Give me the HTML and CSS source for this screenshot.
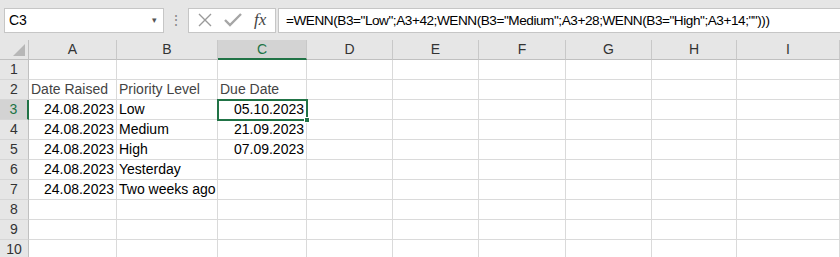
FILE: index.html
```html
<!doctype html>
<html lang="de">
<head>
<meta charset="UTF-8">
<title>Due Date</title>
<link rel="stylesheet" href="styles.css">
</head>
<body>
<div class="toolbar">
  <div class="namebox">
    <span>C3</span>
    <span class="caret">&#9662;</span>
  </div>
  <div class="grip">&#8942;</div>
  <div class="fxbox">
    <svg class="icon" width="14" height="14" viewBox="0 0 14 14">
      <path d="M1 1 L13 13 M13 1 L1 13" stroke="#9a9a9a" stroke-width="1.4" fill="none"/>
    </svg>
    <svg class="icon" width="18" height="14" viewBox="0 0 18 14">
      <path d="M1 7 L6 12 L17 1" stroke="#a6a6a6" stroke-width="2.4" fill="none"/>
    </svg>
    <span class="fx">fx</span>
  </div>
  <div class="formula">=WENN(B3="Low";A3+42;WENN(B3="Medium";A3+28;WENN(B3="High";A3+14;"")))</div>
</div>

<div class="sheet">
  <div class="corner">
    <svg width="12" height="12" viewBox="0 0 12 12"><polygon points="12,0 12,12 0,12" fill="#b7b7b7"/></svg>
  </div>
  <div class="colhead">A</div>
  <div class="colhead">B</div>
  <div class="colhead sel">C</div>
  <div class="colhead">D</div>
  <div class="colhead">E</div>
  <div class="colhead">F</div>
  <div class="colhead">G</div>
  <div class="colhead">H</div>
  <div class="colhead">I</div>

  <div class="rowhead">1</div>
  <div class="cell"></div><div class="cell"></div><div class="cell"></div><div class="cell"></div><div class="cell"></div><div class="cell"></div><div class="cell"></div><div class="cell"></div><div class="cell"></div>

  <div class="rowhead">2</div>
  <div class="cell label">Date Raised</div><div class="cell label">Priority Level</div><div class="cell label">Due Date</div><div class="cell"></div><div class="cell"></div><div class="cell"></div><div class="cell"></div><div class="cell"></div><div class="cell"></div>

  <div class="rowhead sel">3</div>
  <div class="cell num">24.08.2023</div><div class="cell">Low</div><div class="cell num active">05.10.2023<span class="handle"></span></div><div class="cell"></div><div class="cell"></div><div class="cell"></div><div class="cell"></div><div class="cell"></div><div class="cell"></div>

  <div class="rowhead">4</div>
  <div class="cell num">24.08.2023</div><div class="cell">Medium</div><div class="cell num">21.09.2023</div><div class="cell"></div><div class="cell"></div><div class="cell"></div><div class="cell"></div><div class="cell"></div><div class="cell"></div>

  <div class="rowhead">5</div>
  <div class="cell num">24.08.2023</div><div class="cell">High</div><div class="cell num">07.09.2023</div><div class="cell"></div><div class="cell"></div><div class="cell"></div><div class="cell"></div><div class="cell"></div><div class="cell"></div>

  <div class="rowhead">6</div>
  <div class="cell num">24.08.2023</div><div class="cell">Yesterday</div><div class="cell"></div><div class="cell"></div><div class="cell"></div><div class="cell"></div><div class="cell"></div><div class="cell"></div><div class="cell"></div>

  <div class="rowhead">7</div>
  <div class="cell num">24.08.2023</div><div class="cell overflow">Two weeks ago</div><div class="cell"></div><div class="cell"></div><div class="cell"></div><div class="cell"></div><div class="cell"></div><div class="cell"></div><div class="cell"></div>

  <div class="rowhead">8</div>
  <div class="cell"></div><div class="cell"></div><div class="cell"></div><div class="cell"></div><div class="cell"></div><div class="cell"></div><div class="cell"></div><div class="cell"></div><div class="cell"></div>

  <div class="rowhead">9</div>
  <div class="cell"></div><div class="cell"></div><div class="cell"></div><div class="cell"></div><div class="cell"></div><div class="cell"></div><div class="cell"></div><div class="cell"></div><div class="cell"></div>

  <div class="rowhead">10</div>
  <div class="cell"></div><div class="cell"></div><div class="cell"></div><div class="cell"></div><div class="cell"></div><div class="cell"></div><div class="cell"></div><div class="cell"></div><div class="cell"></div>
</div>
</body>
</html>
```

FILE: styles.css
```css
* {
  box-sizing: border-box;
}
body {
  margin: 0;
  font-family: "Liberation Sans", Arial, sans-serif;
  font-size: 14px;
  color: #000;
  overflow: hidden;
  background: #fff;
}
.toolbar {
  height: 40px;
  background: #e6e6e6;
  display: flex;
  align-items: center;
  padding: 0 0 0 4px;
}
.namebox {
  width: 160px;
  height: 25px;
  background: #fff;
  border: 1px solid #c6c6c6;
  display: flex;
  align-items: center;
  justify-content: space-between;
  padding: 0 6px 0 4px;
  font-size: 14px;
}
.caret {
  font-size: 9px;
  color: #555;
}
.grip {
  width: 24px;
  text-align: center;
  color: #888;
  font-size: 14px;
}
.fxbox {
  width: 88px;
  height: 25px;
  background: #fff;
  border: 1px solid #c6c6c6;
  display: flex;
  align-items: center;
  gap: 12px;
  padding-left: 9px;
}
.fx {
  font-family: "Liberation Serif", serif;
  font-style: italic;
  font-size: 17px;
  color: #444;
}
.formula {
  flex: 1;
  height: 25px;
  margin-left: 2px;
  background: #fff;
  border: 1px solid #c6c6c6;
  border-right: none;
  display: flex;
  align-items: center;
  padding-left: 7px;
  font-size: 13.6px;
  letter-spacing: -0.45px;
  white-space: nowrap;
}
.sheet {
  display: grid;
  grid-template-columns: 29px 88px 101px 89px 86px 86px 87px 86px 85px 1fr;
  grid-template-rows: 20px repeat(10, 20px);
}
.corner {
  background: #e6e6e6;
  border-right: 1px solid #c0c0c0;
  border-bottom: 1px solid #c0c0c0;
  display: flex;
  align-items: flex-end;
  justify-content: flex-end;
  padding: 0 3px 3px 0;
}
.colhead {
  background: #e6e6e6;
  border-right: 1px solid #c8c8c8;
  border-bottom: 1px solid #c0c0c0;
  text-align: center;
  line-height: 19px;
  color: #333;
}
.colhead.sel {
  background: #d3d3d3;
  color: #217346;
  border-bottom: 2px solid #217346;
}
.rowhead {
  background: #e6e6e6;
  border-right: 1px solid #c0c0c0;
  border-bottom: 1px solid #d6d6d6;
  text-align: center;
  line-height: 19px;
  color: #333;
}
.rowhead.sel {
  background: #d3d3d3;
  color: #217346;
  border-right: 2px solid #217346;
}
.cell {
  border-right: 1px solid #dadada;
  border-bottom: 1px solid #dadada;
  line-height: 19px;
  padding: 0 2px;
  white-space: nowrap;
  position: relative;
}
.cell.label {
  color: #444;
}
.cell.num {
  text-align: right;
}
.cell.overflow {
  overflow: visible;
  z-index: 1;
}
.cell.active {
  outline: 2px solid #217346;
  outline-offset: -1px;
  z-index: 2;
}
.handle {
  position: absolute;
  right: -4px;
  bottom: -4px;
  width: 6px;
  height: 6px;
  background: #217346;
  border: 1px solid #fff;
}
```
